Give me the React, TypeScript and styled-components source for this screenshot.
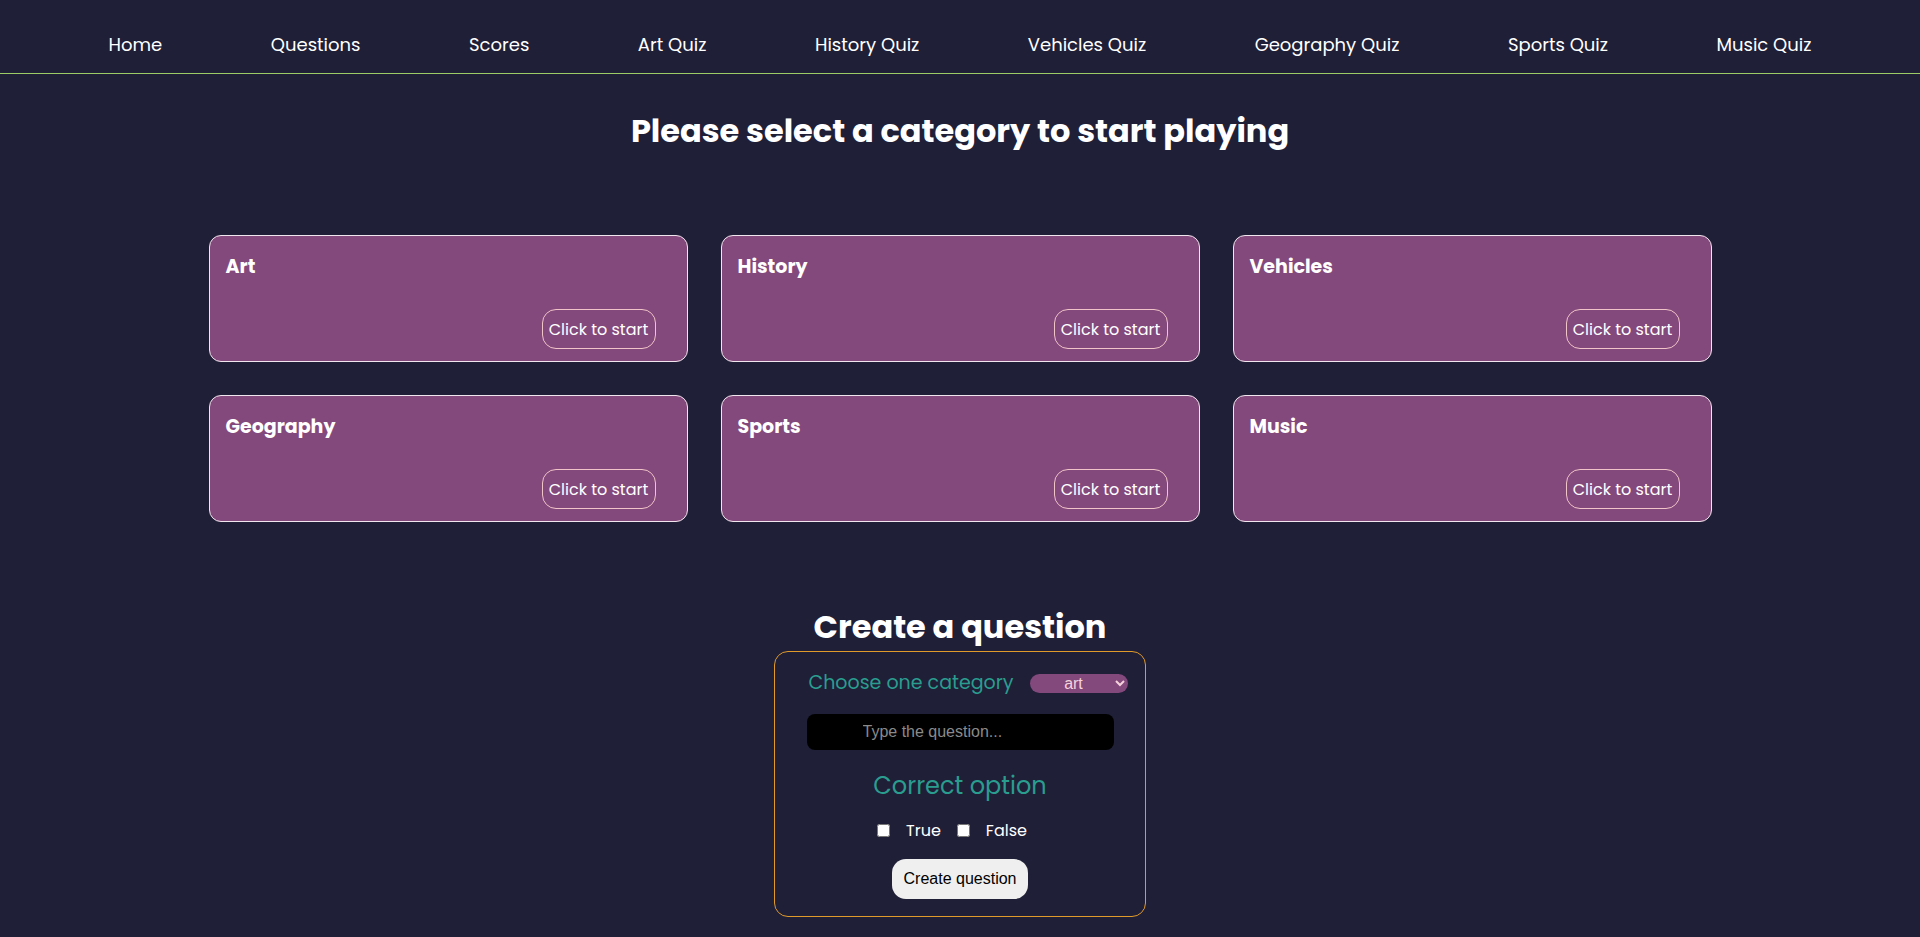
import React from "react";
import styled, { createGlobalStyle } from "styled-components";

const GlobalStyle = createGlobalStyle`
  html, body { margin: 0; padding: 0; background: #1f1f38; }
  body { font-family: "Poppins", "Open Sans", "Noto Sans", sans-serif; color: #ffffff; }
  * { box-sizing: border-box; }
`;

const Page = styled.div`
  min-height: 937px;
  background: #1f1f38;
`;

const Nav = styled.nav`
  height: 74px;
  display: flex;
  align-items: flex-end;
  justify-content: space-evenly;
  padding-bottom: 15px;
  border-bottom: 1px solid #9ccc65;
`;

const NavLink = styled.a`
  color: #ffffff;
  font-size: 18px;
  line-height: 27px;
  text-decoration: none;
  cursor: pointer;
`;

const Title = styled.h1`
  margin: 37px 0 0;
  text-align: center;
  font-size: 32px;
  font-weight: 700;
  line-height: 40px;
`;

const Grid = styled.div`
  width: 1503px;
  margin: 84px auto 0;
  display: grid;
  grid-template-columns: repeat(3, 1fr);
  column-gap: 33px;
  row-gap: 33px;
`;

const Card = styled.div`
  height: 127px;
  background: #84497c;
  border: 1px solid #f2e6ee;
  border-radius: 12px;
  padding: 18px 31px 12px 16px;
  display: flex;
  flex-direction: column;
  justify-content: space-between;
`;

const CardTitle = styled.h3`
  margin: 0;
  font-size: 19px;
  font-weight: 700;
  line-height: 26px;
`;

const StartButton = styled.button`
  align-self: flex-end;
  width: 114px;
  height: 40px;
  background: transparent;
  border: 1px solid #f0c4c8;
  border-radius: 14px;
  color: #ffffff;
  font-family: inherit;
  font-size: 16px;
  padding: 0;
  cursor: pointer;
`;

const SectionTitle = styled.h2`
  margin: 85px 0 0;
  text-align: center;
  font-size: 32px;
  font-weight: 700;
  line-height: 40px;
`;

const Form = styled.form`
  width: 372px;
  margin: 4px auto 0;
  border: 1px solid #e09a2a;
  border-radius: 14px;
  padding: 19px 0 17px;
  display: flex;
  flex-direction: column;
  align-items: center;
`;

const CategoryRow = styled.div`
  display: flex;
  align-items: center;
  gap: 17px;
  margin-left: 17px;
`;

const TealLabel = styled.label`
  color: #2a9d8f;
  font-size: 19px;
  line-height: 1.3;
`;

const Select = styled.select`
  width: 98px;
  height: 19px;
  background: #84497c;
  color: #f6d3dc;
  border: none;
  border-radius: 10px;
  font-family: "Liberation Sans", Arial, sans-serif;
  font-size: 16px;
  text-align: center;
  text-align-last: center;
  padding: 0 4px;
  outline: none;
`;

const QuestionInput = styled.input`
  width: 307px;
  height: 36px;
  margin-top: 18px;
  background: #000000;
  border: none;
  border-radius: 8px;
  padding: 0 0 0 56px;
  color: #ffffff;
  font-family: "Liberation Sans", Arial, sans-serif;
  font-size: 16px;
  outline: none;
  &::placeholder { color: #8a8a8a; }
`;

const OptionTitle = styled.h4`
  margin: 18px 0 0;
  color: #2a9d8f;
  font-size: 24px;
  font-weight: 400;
  line-height: 36px;
`;

const CheckRow = styled.div`
  display: flex;
  align-items: center;
  margin-top: 15px;
`;

const Check = styled.input`
  width: 13px;
  height: 13px;
  margin: 0 16px 0 0;
`;

const CheckLabel = styled.span`
  font-size: 16px;
  line-height: 24px;
  margin-right: 16px;
`;

const CreateButton = styled.button`
  margin-top: 16px;
  width: 136px;
  height: 40px;
  background: #efefef;
  border: none;
  border-radius: 14px;
  color: #000000;
  font-family: "Liberation Sans", Arial, sans-serif;
  font-size: 16px;
  cursor: pointer;
`;

const navItems = [
  "Home",
  "Questions",
  "Scores",
  "Art Quiz",
  "History Quiz",
  "Vehicles Quiz",
  "Geography Quiz",
  "Sports Quiz",
  "Music Quiz",
];

const categories = ["Art", "History", "Vehicles", "Geography", "Sports", "Music"];

export default function App() {
  return (
    <Page>
      <GlobalStyle />
      <Nav>
        {navItems.map((n) => (
          <NavLink key={n}>{n}</NavLink>
        ))}
      </Nav>
      <Title>Please select a category to start playing</Title>
      <Grid>
        {categories.map((c) => (
          <Card key={c}>
            <CardTitle>{c}</CardTitle>
            <StartButton type="button">Click to start</StartButton>
          </Card>
        ))}
      </Grid>
      <SectionTitle>Create a question</SectionTitle>
      <Form onSubmit={(e) => e.preventDefault()}>
        <CategoryRow>
          <TealLabel>Choose one category</TealLabel>
          <Select defaultValue="art">
            <option value="art">art</option>
            <option value="history">history</option>
            <option value="vehicles">vehicles</option>
            <option value="geography">geography</option>
            <option value="sports">sports</option>
            <option value="music">music</option>
          </Select>
        </CategoryRow>
        <QuestionInput placeholder="Type the question..." />
        <OptionTitle>Correct option</OptionTitle>
        <CheckRow>
          <Check type="checkbox" />
          <CheckLabel>True</CheckLabel>
          <Check type="checkbox" />
          <CheckLabel>False</CheckLabel>
        </CheckRow>
        <CreateButton type="submit">Create question</CreateButton>
      </Form>
    </Page>
  );
}
